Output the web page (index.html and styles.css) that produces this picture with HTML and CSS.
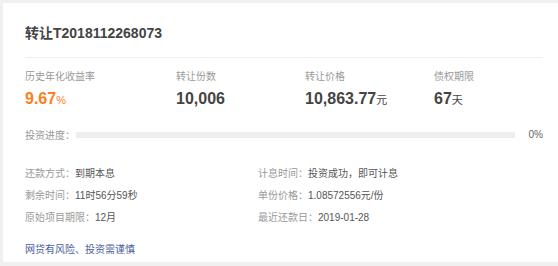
FILE: index.html
```html
<!DOCTYPE html>
<html lang="en">
<head>
<meta charset="utf-8">
<title>转让详情</title>
<link rel="stylesheet" href="styles.css">
</head>
<body>
<div class="card">
  <div class="header">
    <h1 class="title">转让T2018112268073</h1>
  </div>
  <div class="stats">
    <div class="stat">
      <div class="stat-label">历史年化收益率</div>
      <div class="stat-value orange">9.67<span class="unit">%</span></div>
    </div>
    <div class="stat">
      <div class="stat-label">转让份数</div>
      <div class="stat-value">10,006</div>
    </div>
    <div class="stat">
      <div class="stat-label">转让价格</div>
      <div class="stat-value">10,863.77<span class="unit">元</span></div>
    </div>
    <div class="stat">
      <div class="stat-label">债权期限</div>
      <div class="stat-value">67<span class="unit">天</span></div>
    </div>
  </div>
  <div class="progress-row">
    <span class="progress-label">投资进度：</span>
    <div class="progress-bar"><div class="progress-fill" style="width:0%"></div></div>
    <span class="progress-pct">0%</span>
  </div>
  <div class="details">
    <div class="detail"><span class="dl">还款方式：</span><span class="dv">到期本息</span></div>
    <div class="detail"><span class="dl">计息时间：</span><span class="dv">投资成功，即可计息</span></div>
    <div class="detail"><span class="dl">剩余时间：</span><span class="dv">11时56分59秒</span></div>
    <div class="detail"><span class="dl">单份价格：</span><span class="dv">1.08572556元/份</span></div>
    <div class="detail"><span class="dl">原始项目期限：</span><span class="dv">12月</span></div>
    <div class="detail"><span class="dl">最近还款日：</span><span class="dv">2019-01-28</span></div>
  </div>
  <div class="footer">
    <a class="risk" href="#">网贷有风险、投资需谨慎</a>
  </div>
</div>
</body>
</html>
```
FILE: styles.css
```css
html, body {
  margin: 0;
  padding: 0;
}
body {
  background: #f0f0f0;
  font-family: "Liberation Sans", "Noto Sans CJK SC", sans-serif;
  width: 558px;
  height: 266px;
  overflow: hidden;
}
.card {
  margin: 3px 0 4px 3px;
  background: #fff;
  height: 259px;
  box-sizing: border-box;
  padding: 20px 15px 0 22px;
}
.header {
  padding-bottom: 14px;
  border-bottom: 1px solid #eeeeee;
}
.title {
  margin: 0;
  font-size: 14px;
  line-height: 20px;
  font-weight: bold;
  color: #444;
}
.stats {
  display: grid;
  grid-template-columns: 151px 129px 129px 1fr;
  margin-top: 11px;
}
.stat-label {
  font-size: 10px;
  line-height: 16px;
  color: #999;
}
.stat-value {
  margin-top: 4px;
  font-size: 16px;
  line-height: 20px;
  font-weight: bold;
  color: #444;
}
.stat-value.orange {
  color: #ff7d1a;
}
.unit {
  font-size: 11px;
  font-weight: normal;
}
.progress-row {
  display: flex;
  align-items: center;
  margin-top: 16px;
  height: 16px;
}
.progress-label {
  font-size: 10px;
  color: #999;
  width: 51px;
  flex: none;
}
.progress-bar {
  flex: 1;
  height: 6px;
  background: #eeeeee;
  margin-top: 2px;
}
.progress-fill {
  height: 100%;
  background: #ff7d1a;
}
.progress-pct {
  width: 28px;
  text-align: right;
  font-size: 10px;
  color: #666;
  flex: none;
}
.details {
  display: grid;
  grid-template-columns: 233px 1fr;
  margin-top: 21px;
}
.detail {
  font-size: 10px;
  line-height: 22px;
}
.dl {
  color: #999;
}
.dv {
  color: #555;
}
.footer {
  margin-top: 11px;
  line-height: 16px;
}
.risk {
  font-size: 10px;
  color: #4a5e9e;
  text-decoration: none;
}
```
